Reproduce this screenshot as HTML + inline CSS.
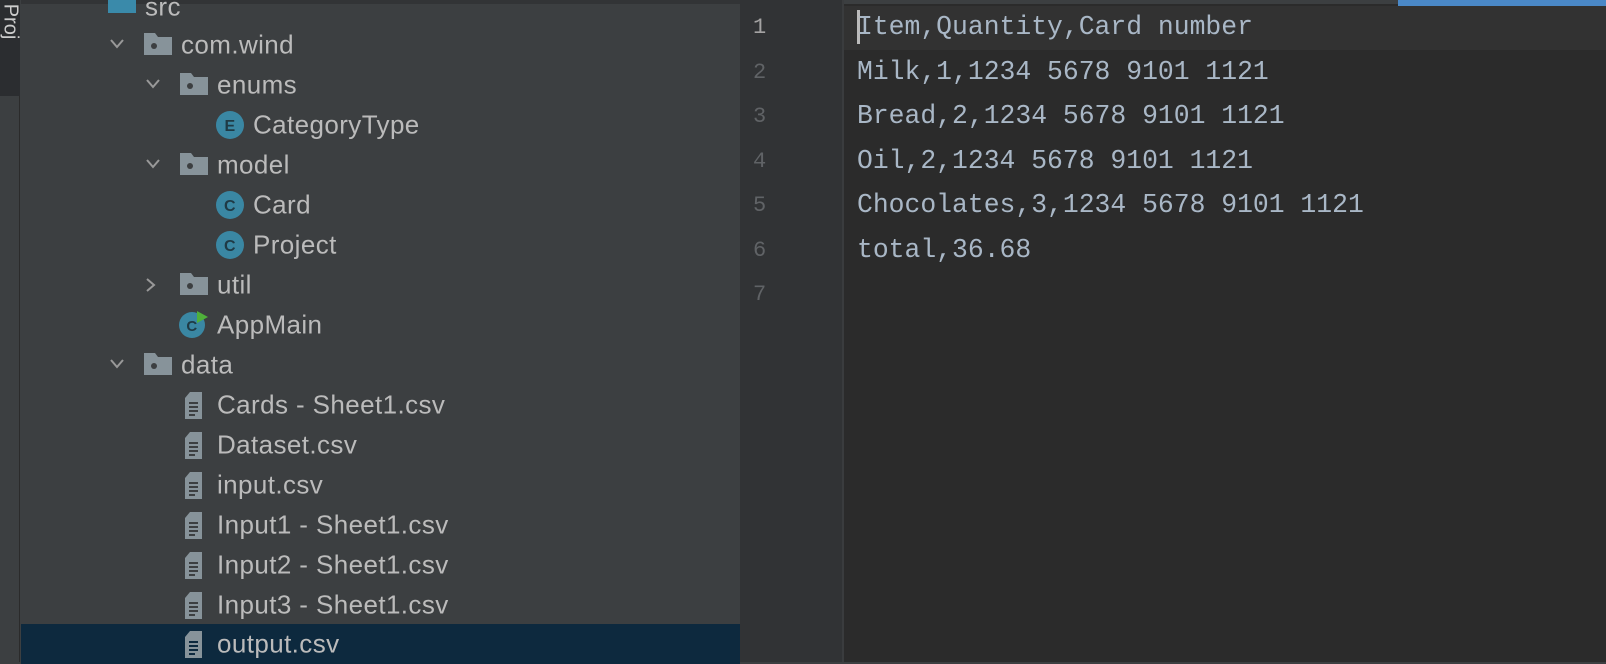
<!DOCTYPE html>
<html><head><style>
*{margin:0;padding:0;box-sizing:border-box}
body{width:1606px;height:662px;overflow:hidden;background:#3c3f41;position:relative;font-family:"Liberation Sans",sans-serif}
.strip{position:absolute;left:0;top:0;width:20px;height:662px;background:#3c3f41;border-right:1px solid #2b2b2b}
.strip .top{position:absolute;left:0;top:0;width:20px;height:96px;background:#2b2d30}
.strip .t{position:absolute;left:-8px;top:10px;transform:rotate(90deg);color:#ccc;font-size:20px}
.tree{position:absolute;left:21px;top:0;width:719px;height:662px;background:#3c3f41}
.row{position:absolute;left:0;width:719px;height:40px;color:#bbbbbb;font-size:26px;letter-spacing:0.4px}
.row span.tx{position:absolute;top:50%;transform:translateY(-50%);white-space:nowrap}
.row svg{position:absolute}
.sel{background:#0d293e}
.ed{position:absolute;left:740px;top:0;width:866px;height:662px;background:#2b2b2b}
.gut{position:absolute;left:0;top:0;width:104px;height:662px;background:#313335;border-right:2px solid #3a3c3e}
.ln{position:absolute;left:13px;color:#606366;font-family:"Liberation Mono",monospace;font-size:22px}
.code{position:absolute;left:117px;color:#a9b7c6;font-family:"Liberation Mono",monospace;font-size:26.4px;white-space:pre}
</style></head><body>
<div class="strip"><div class="top"></div><div class="t">Proj</div></div>
<div class="tree">
<div style="position:absolute;left:0;top:0;width:719px;height:4px;background:#323436"></div>
<div class="row" style="top:5px"><svg style="left:87px;top:-12px" width="28" height="20"><rect width="28" height="20" fill="#3a8aaa"/></svg><span class="tx" style="left:124px;top:2px">src</span></div>
<div class="row" style="top:25px">
<svg style="left:88px;top:13px" width="16" height="12"><path d="M2 2 L8 9 L14 2" stroke="#999" stroke-width="2" fill="none"/></svg>
<svg style="left:123px;top:8px" width="28" height="22"><path d="M0 0H11L14 4H28V22H0Z" fill="#87939a"/><circle cx="10" cy="13" r="3" fill="#3c3f41"/></svg>
<span class="tx" style="left:160px">com.wind</span></div>
<div class="row" style="top:65px">
<svg style="left:124px;top:13px" width="16" height="12"><path d="M2 2 L8 9 L14 2" stroke="#999" stroke-width="2" fill="none"/></svg>
<svg style="left:159px;top:8px" width="28" height="22"><path d="M0 0H11L14 4H28V22H0Z" fill="#87939a"/><circle cx="10" cy="13" r="3" fill="#3c3f41"/></svg>
<span class="tx" style="left:196px">enums</span></div>
<div class="row" style="top:105px">
<svg style="left:195px;top:6px" width="28" height="28"><circle cx="14" cy="14" r="14" fill="#3a87a3"/><text x="14" y="20" text-anchor="middle" font-family="Liberation Sans" font-size="16" font-weight="bold" fill="#1f3a45">E</text></svg>
<span class="tx" style="left:232px">CategoryType</span></div>
<div class="row" style="top:145px">
<svg style="left:124px;top:13px" width="16" height="12"><path d="M2 2 L8 9 L14 2" stroke="#999" stroke-width="2" fill="none"/></svg>
<svg style="left:159px;top:8px" width="28" height="22"><path d="M0 0H11L14 4H28V22H0Z" fill="#87939a"/><circle cx="10" cy="13" r="3" fill="#3c3f41"/></svg>
<span class="tx" style="left:196px">model</span></div>
<div class="row" style="top:185px">
<svg style="left:195px;top:6px" width="28" height="28"><circle cx="14" cy="14" r="14" fill="#3a87a3"/><text x="14" y="20" text-anchor="middle" font-family="Liberation Sans" font-size="16" font-weight="bold" fill="#1f3a45">C</text></svg>
<span class="tx" style="left:232px">Card</span></div>
<div class="row" style="top:225px">
<svg style="left:195px;top:6px" width="28" height="28"><circle cx="14" cy="14" r="14" fill="#3a87a3"/><text x="14" y="20" text-anchor="middle" font-family="Liberation Sans" font-size="16" font-weight="bold" fill="#1f3a45">C</text></svg>
<span class="tx" style="left:232px">Project</span></div>
<div class="row" style="top:265px">
<svg style="left:124px;top:12px" width="12" height="16"><path d="M2 2 L9 8 L2 14" stroke="#999" stroke-width="2" fill="none"/></svg>
<svg style="left:159px;top:8px" width="28" height="22"><path d="M0 0H11L14 4H28V22H0Z" fill="#87939a"/><circle cx="10" cy="13" r="3" fill="#3c3f41"/></svg>
<span class="tx" style="left:196px">util</span></div>
<div class="row" style="top:305px">
<svg style="left:158px;top:4px" width="32" height="32"><circle cx="13" cy="16" r="13" fill="#3a87a3"/><text x="13" y="22" text-anchor="middle" font-family="Liberation Sans" font-size="15" font-weight="bold" fill="#1f3a45">C</text><path d="M18 2 L29 8 L18 14Z" fill="#4fb03a"/></svg>
<span class="tx" style="left:196px">AppMain</span></div>
<div class="row" style="top:345px">
<svg style="left:88px;top:13px" width="16" height="12"><path d="M2 2 L8 9 L14 2" stroke="#999" stroke-width="2" fill="none"/></svg>
<svg style="left:123px;top:8px" width="28" height="22"><path d="M0 0H11L14 4H28V22H0Z" fill="#87939a"/><circle cx="10" cy="13" r="3" fill="#3c3f41"/></svg>
<span class="tx" style="left:160px">data</span></div>
<div class="row" style="top:385px"><svg style="left:164px;top:7px" width="17" height="27"><path d="M5 0H17V27H0V6Z" fill="#87939a"/><path d="M4 11H13M4 15H13M4 19H13M4 23H10" stroke="#3c3f41" stroke-width="2"/></svg><span class="tx" style="left:196px">Cards - Sheet1.csv</span></div>
<div class="row" style="top:425px"><svg style="left:164px;top:7px" width="17" height="27"><path d="M5 0H17V27H0V6Z" fill="#87939a"/><path d="M4 11H13M4 15H13M4 19H13M4 23H10" stroke="#3c3f41" stroke-width="2"/></svg><span class="tx" style="left:196px">Dataset.csv</span></div>
<div class="row" style="top:465px"><svg style="left:164px;top:7px" width="17" height="27"><path d="M5 0H17V27H0V6Z" fill="#87939a"/><path d="M4 11H13M4 15H13M4 19H13M4 23H10" stroke="#3c3f41" stroke-width="2"/></svg><span class="tx" style="left:196px">input.csv</span></div>
<div class="row" style="top:505px"><svg style="left:164px;top:7px" width="17" height="27"><path d="M5 0H17V27H0V6Z" fill="#87939a"/><path d="M4 11H13M4 15H13M4 19H13M4 23H10" stroke="#3c3f41" stroke-width="2"/></svg><span class="tx" style="left:196px">Input1 - Sheet1.csv</span></div>
<div class="row" style="top:545px"><svg style="left:164px;top:7px" width="17" height="27"><path d="M5 0H17V27H0V6Z" fill="#87939a"/><path d="M4 11H13M4 15H13M4 19H13M4 23H10" stroke="#3c3f41" stroke-width="2"/></svg><span class="tx" style="left:196px">Input2 - Sheet1.csv</span></div>
<div class="row" style="top:585px"><svg style="left:164px;top:7px" width="17" height="27"><path d="M5 0H17V27H0V6Z" fill="#87939a"/><path d="M4 11H13M4 15H13M4 19H13M4 23H10" stroke="#3c3f41" stroke-width="2"/></svg><span class="tx" style="left:196px">Input3 - Sheet1.csv</span></div>
<div class="row sel" style="top:624px;height:40px"><svg style="left:164px;top:7px" width="17" height="27"><path d="M5 0H17V27H0V6Z" fill="#87939a"/><path d="M4 11H13M4 15H13M4 19H13M4 23H10" stroke="#0d293e" stroke-width="2"/></svg><span class="tx" style="left:196px">output.csv</span></div>
</div>
<div class="ed">
<div style="position:absolute;left:0;top:0;width:866px;height:4px;background:#3c3f41"></div>
<div style="position:absolute;left:658px;top:0;width:208px;height:6px;background:#4a88c7"></div>
<div style="position:absolute;left:104px;top:6px;width:762px;height:44px;background:#323232"></div>
<div class="gut"></div>
<div style="position:absolute;left:117px;top:10px;width:3px;height:34px;background:#bbb"></div>
<div class="ln" style="top:15px;color:#a4a3a3">1</div>
<div class="ln" style="top:60px">2</div>
<div class="ln" style="top:104px">3</div>
<div class="ln" style="top:149px">4</div>
<div class="ln" style="top:193px">5</div>
<div class="ln" style="top:238px">6</div>
<div class="ln" style="top:282px">7</div>
<div class="code" style="top:12px">Item,Quantity,Card number</div>
<div class="code" style="top:57px">Milk,1,1234 5678 9101 1121</div>
<div class="code" style="top:101px">Bread,2,1234 5678 9101 1121</div>
<div class="code" style="top:146px">Oil,2,1234 5678 9101 1121</div>
<div class="code" style="top:190px">Chocolates,3,1234 5678 9101 1121</div>
<div class="code" style="top:235px">total,36.68</div>
</div>
</body></html>
